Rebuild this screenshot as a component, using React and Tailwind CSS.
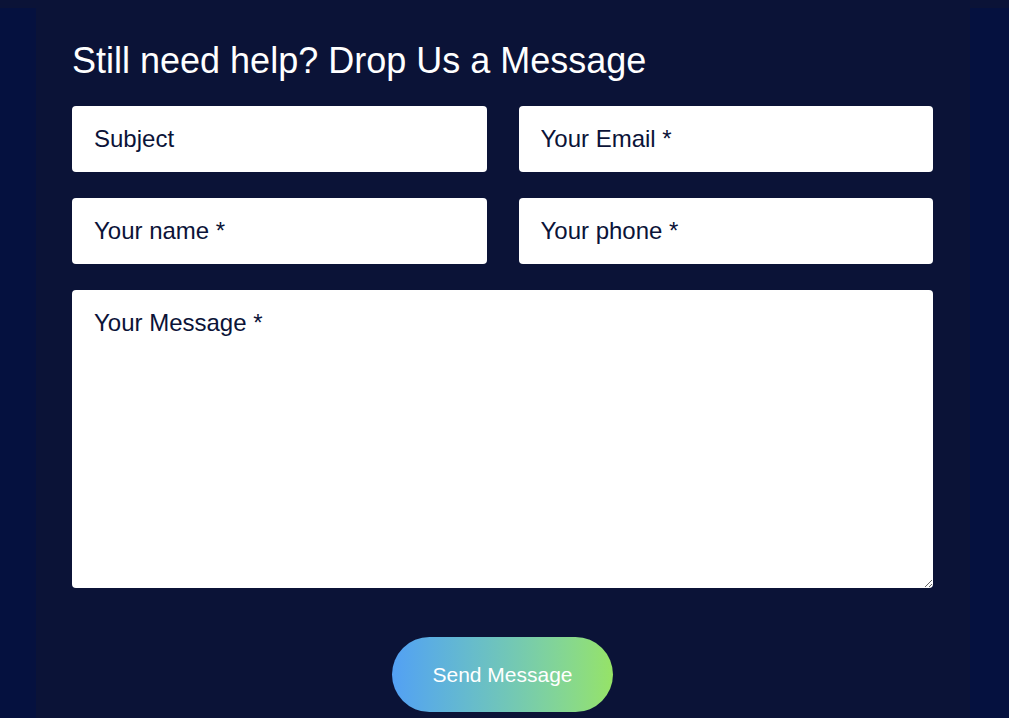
export default function App() {
  const inputCls =
    "h-[66px] w-full rounded-[4px] bg-white px-[22px] text-[24px] text-[#0b1338] placeholder:text-[#0b1338] outline-none border-0";
  return (
    <div className="min-h-[718px] bg-[#0b1337] pt-[8px] font-['Liberation_Sans',Arial,sans-serif]">
      <div className="flex min-h-[710px] bg-[#05113f] pl-[36px] pr-[39px]">
        <div className="flex-1 bg-[#0b1337] pl-[36px] pr-[37px] pt-[32px]">
          <h2 className="text-[36px] leading-[41px] text-white font-normal">
            Still need help? Drop Us a Message
          </h2>
          <form className="mt-[25px] flex flex-col gap-[26px]">
            <div className="grid grid-cols-2 gap-x-[32px] gap-y-[26px]">
              <input className={inputCls} placeholder="Subject" />
              <input className={inputCls} placeholder="Your Email *" />
              <input className={inputCls} placeholder="Your name *" />
              <input className={inputCls} placeholder="Your phone *" />
            </div>
            <textarea
              className="block h-[298px] w-full rounded-[4px] bg-white px-[22px] pt-[19px] text-[24px] leading-[28px] text-[#0b1338] placeholder:text-[#0b1338] outline-none border-0"
              placeholder="Your Message *"
            />
          </form>
          <div className="mt-[49px] flex justify-center">
            <button
              type="button"
              className="h-[75px] w-[221px] rounded-full bg-gradient-to-r from-[#53a0f4] to-[#96e366] text-[21px] text-white"
            >
              Send Message
            </button>
          </div>
        </div>
      </div>
    </div>
  );
}
